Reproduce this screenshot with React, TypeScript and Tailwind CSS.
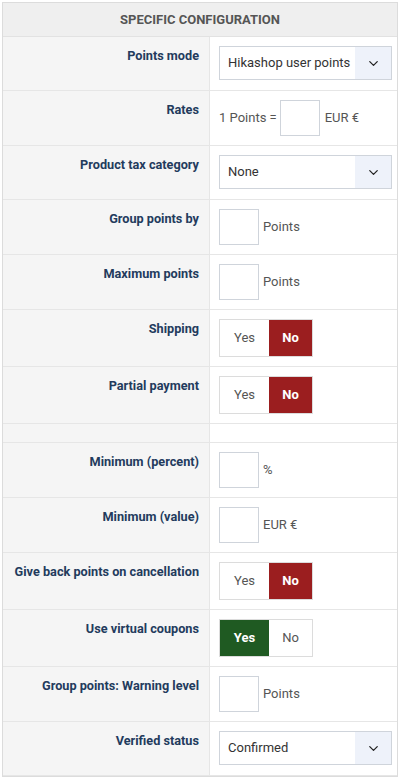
import { ChevronDown } from "lucide-react";

type Field =
  | { label: string; kind: "select"; value: string }
  | { label: string; kind: "rate" }
  | { label: string; kind: "input"; unit: string }
  | { label: string; kind: "toggle"; on: boolean }
  | { label: string; kind: "empty" };

const fields: Field[] = [
  { label: "Points mode", kind: "select", value: "Hikashop user points" },
  { label: "Rates", kind: "rate" },
  { label: "Product tax category", kind: "select", value: "None" },
  { label: "Group points by", kind: "input", unit: "Points" },
  { label: "Maximum points", kind: "input", unit: "Points" },
  { label: "Shipping", kind: "toggle", on: false },
  { label: "Partial payment", kind: "toggle", on: false },
  { label: "", kind: "empty" },
  { label: "Minimum (percent)", kind: "input", unit: "%" },
  { label: "Minimum (value)", kind: "input", unit: "EUR €" },
  { label: "Give back points on cancellation", kind: "toggle", on: false },
  { label: "Use virtual coupons", kind: "toggle", on: true },
  { label: "Group points: Warning level", kind: "input", unit: "Points" },
  { label: "Verified status", kind: "select", value: "Confirmed" },
];

function Select({ value }: { value: string }) {
  return (
    <div className="mb-[1px] flex h-[34px] w-[173px] border border-[#cfd4db] bg-white">
      <div className="flex flex-1 items-center pl-[8px] text-[13px] text-[#333]">{value}</div>
      <div className="flex w-[36px] items-center justify-center bg-[#eef2fa]">
        <ChevronDown size={15} strokeWidth={2} className="text-[#222]" />
      </div>
    </div>
  );
}

function Box() {
  return <div className="h-[36px] w-[40px] border border-[#cfd4db] bg-white" />;
}

function Toggle({ on }: { on: boolean }) {
  return (
    <div className="flex h-[38px] w-[94px] border border-[#dcdcdc] text-[13px]">
      <div
        className={
          on
            ? "flex w-[49px] items-center justify-center bg-[#1f5a22] font-bold text-white"
            : "flex w-[49px] items-center justify-center bg-white text-[#555]"
        }
      >
        Yes
      </div>
      <div
        className={
          on
            ? "flex flex-1 items-center justify-center bg-white text-[#555]"
            : "flex flex-1 items-center justify-center bg-[#9b1e1f] font-bold text-white"
        }
      >
        No
      </div>
    </div>
  );
}

function Control({ f }: { f: Field }) {
  switch (f.kind) {
    case "select":
      return <Select value={f.value} />;
    case "rate":
      return (
        <div className="flex items-center text-[13px] text-[#555]">
          <span className="mr-[3px]">1 Points =</span>
          <Box />
          <span className="ml-[5px]">EUR €</span>
        </div>
      );
    case "input":
      return (
        <div className="flex items-center text-[13px] text-[#555]">
          <Box />
          <span className="ml-[4px]">{f.unit}</span>
        </div>
      );
    case "toggle":
      return <Toggle on={f.on} />;
    default:
      return null;
  }
}

export default function App() {
  return (
    <div className="bg-white pl-[2px] pt-[2px]" style={{ fontFamily: "Roboto, 'Liberation Sans', sans-serif" }}>
      <div className="w-[396px] border border-[#dcdcdc]">
        <div className="flex h-[34px] items-center justify-center border-b border-[#e2e2e2] bg-[#efefef] text-[13px] font-bold uppercase text-[#555]">
          Specific configuration
        </div>
        {fields.map((f, i) => (
          <div key={i} className="flex border-b border-[#e6e6e6]">
            <div className="w-[207px] shrink-0 border-r border-[#e6e6e6] bg-[#f5f5f5] pr-[10px] pt-[10px] text-right text-[12.7px] font-bold leading-[17px] text-[#233b5d]">
              {f.label}
            </div>
            <div className={f.kind === "empty" ? "h-[18px] flex-1 bg-white" : "flex-1 bg-white pb-[9px] pl-[9px] pt-[9px]"}>
              <Control f={f} />
            </div>
          </div>
        ))}
      </div>
    </div>
  );
}
